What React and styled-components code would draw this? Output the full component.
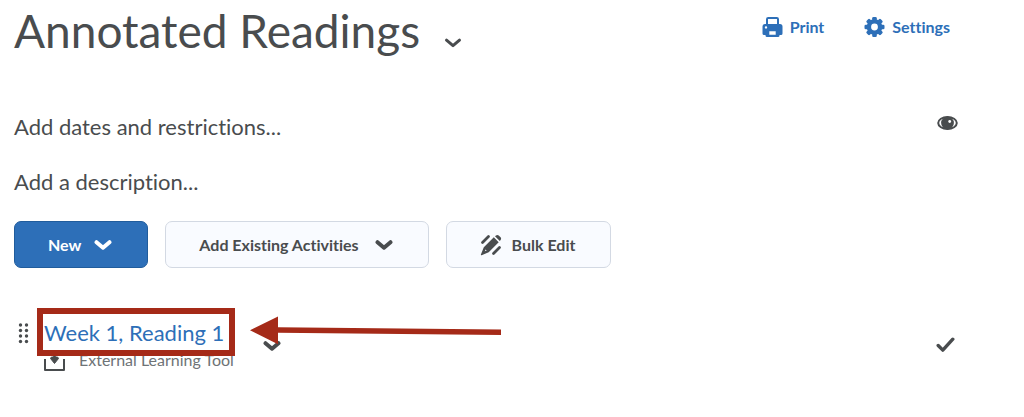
import styled, { createGlobalStyle } from "styled-components"

const GlobalStyle = createGlobalStyle`
    body {
        margin: 0;
        background: #fff;
        color: #494c4e;
        font-family: Lato, "Liberation Sans", sans-serif;
        font-variant-ligatures: none;
    }
    *, *::before, *::after {
        box-sizing: border-box;
    }
    button {
        font-family: inherit;
        font-variant-ligatures: none;
    }
    svg {
        display: block;
        flex: none;
    }
`;

const Page = styled.main`
    padding: 0 74px 32px 14px;
`;

const Header = styled.header`
    display: flex;
    justify-content: space-between;
    align-items: flex-start;
    margin-bottom: 49px;
`;

const TitleGroup = styled.div`
    display: flex;
    align-items: flex-end;
    gap: 24px;
`;

const Title = styled.h1`
    margin: 0;
    font-size: 46px;
    font-weight: 400;
    line-height: 62px;
`;

const IconButton = styled.button`
    padding: 0;
    border: 0;
    background: none;
    color: inherit;
    cursor: pointer;
`;

const TitleMenu = styled(IconButton)`
    margin-bottom: 13px;
`;

const Actions = styled.nav`
    display: flex;
    gap: 40px;
    padding-top: 16px;
`;

const Action = styled.button`
    display: flex;
    align-items: center;
    gap: 7px;
    padding: 0;
    border: 0;
    background: none;
    color: #2d6fb8;
    font-size: 16px;
    font-weight: 700;
    line-height: 22px;
    cursor: pointer;
`;

const Details = styled.div`
    display: flex;
    flex-direction: column;
    gap: 23px;
    margin-bottom: 23px;
`;

const DetailRow = styled.div`
    display: flex;
    justify-content: space-between;
    align-items: flex-start;
`;

const DetailButton = styled.button`
    padding: 0;
    border: 0;
    background: none;
    color: inherit;
    font-size: 22px;
    line-height: 32px;
    cursor: pointer;
`;

const VisibilityButton = styled(IconButton)`
    margin: 4px -8px 0 0;
`;

const Toolbar = styled.div`
    display: flex;
    gap: 17px;
    margin-bottom: 49px;
`;

const Button = styled.button`
    display: flex;
    align-items: center;
    gap: ${({ $gap }) => $gap}px;
    height: 47px;
    padding: 0 35px 0 33px;
    border: 1px solid ${({ $primary }) => ($primary ? "#205c9c" : "#d3d9e3")};
    border-radius: 7px;
    background: ${({ $primary }) => ($primary ? "#2d6fb8" : "#f9fbff")};
    color: ${({ $primary }) => ($primary ? "#fff" : "#494c4e")};
    font-size: 16px;
    font-weight: 700;
    line-height: 24px;
    cursor: pointer;
`;

const List = styled.ul`
    margin: 0;
    padding: 0;
    list-style: none;
`;

const Item = styled.li`
    position: relative;
    display: flex;
    align-items: flex-start;
`;

const Handle = styled(IconButton)`
    margin: 6px 15px 0 4px;
`;

const ItemBody = styled.div`
    display: flex;
    flex-direction: column;
    gap: 1px;
`;

const ItemLink = styled.a`
    color: #2d6fb8;
    font-size: 22px;
    line-height: 32px;
    text-decoration: none;
`;

const ItemType = styled.div`
    display: flex;
    align-items: flex-start;
    gap: 14px;
    color: #6e7376;
    font-size: 16px;
    line-height: 20px;
`;

const ToolIconBox = styled.span`
    color: #494c4e;
`;

const ItemMenu = styled(IconButton)`
    margin: 23px 0 0 29px;
`;

const Done = styled.span`
    margin: 19px -5px 0 auto;
`;

const Highlight = styled.div`
    position: absolute;
    top: -9px;
    left: 23px;
    width: 198px;
    height: 48px;
    border: 6px solid #a52a18;
    pointer-events: none;
`;

const Arrow = styled.svg`
    position: absolute;
    top: -1px;
    left: 236px;
    pointer-events: none;
`;

function Chevron({ stroke = 3 }) {
    return (
        <svg width="18" height="12" viewBox="0 0 18 12" fill="none" stroke="currentColor" strokeWidth={stroke} strokeLinecap="round" strokeLinejoin="round" aria-hidden="true">
            <path d="M2.500 3.200 9 8.700l6.500-5.500" />
        </svg>
    )
}

function PrintIcon() {
    return (
        <svg width="21" height="20" viewBox="0 0 20 20" aria-hidden="true">
            <path d="M4.500 8V2.200C4.500 1.500 5 1 5.700 1h8.600c.7 0 1.200.5 1.200 1.200V8" fill="none" stroke="currentColor" strokeWidth="2" />
            <path fill="currentColor" fillRule="evenodd" d="M2.500 7h15A2.500 2.500 0 0 1 20 9.500v7a1.500 1.500 0 0 1-1.500 1.500H17v.5a1.500 1.500 0 0 1-1.500 1.500h-11A1.500 1.500 0 0 1 3 18.500V18H1.500A1.500 1.500 0 0 1 0 16.500v-7A2.500 2.500 0 0 1 2.500 7Zm4.300 7.200v3.600h6.400v-3.600ZM3.500 9.200a1.200 1.200 0 1 0 0 2.400 1.200 1.200 0 0 0 0-2.400Z" />
        </svg>
    )
}

const teeth = [0, 45, 90, 135, 180, 225, 270, 315];

function GearIcon() {
    return (
        <svg width="21" height="20" viewBox="0 0 20 20" aria-hidden="true">
            <circle cx="10" cy="10" r="5.600" fill="none" stroke="currentColor" strokeWidth="4.400" />
            {teeth.map((angle) => (
                <rect key={angle} x="7.700" y="0" width="4.600" height="4.500" rx="1.300" fill="currentColor" transform={`rotate(${angle} 10 10)`} />
            ))}
        </svg>
    )
}

function EyeIcon() {
    return (
        <svg width="21" height="16" viewBox="0 0 21 16" aria-hidden="true">
            <ellipse cx="10.500" cy="8" rx="9.300" ry="6" fill="#fff" stroke="currentColor" strokeWidth="2" />
            <circle cx="10.500" cy="8" r="6.400" fill="currentColor" />
            <circle cx="12.700" cy="6.500" r="1.400" fill="#fff" />
        </svg>
    )
}

function BulkEditIcon() {
    return (
        <svg width="22" height="22" viewBox="0 0 22 22" aria-hidden="true">
            <path d="M2.500 8.500 8.500 2.500M13.500 19.500l6-6" fill="none" stroke="currentColor" strokeWidth="2.800" strokeLinecap="round" />
            <path fill="currentColor" fillRule="evenodd" d="M13.800 3.300 18.700 8.200 8.700 18.200 1.600 21.200c-.6.2-.9-.1-.7-.7L3.800 13.300ZM5.600 15.400l-.8 1.900 1.900-.8Z" />
            <path fill="currentColor" d="m15 2.200 1-.8c.8-.7 1.900-.7 2.700 0l1.900 1.900c.7.8.7 1.900 0 2.700L19.800 7Z" />
        </svg>
    )
}

function DragIcon() {
    return (
        <svg width="11" height="21" viewBox="0 0 11 21" fill="currentColor" aria-hidden="true">
            {[2, 7.500, 13, 18.500].map((y) => (
                <g key={y}>
                    <circle cx="2.500" cy={y} r="1.700" />
                    <circle cx="8.500" cy={y} r="1.700" />
                </g>
            ))}
        </svg>
    )
}

function ToolIcon() {
    return (
        <svg width="21" height="21" viewBox="0 0 21 21" aria-hidden="true">
            <path d="M1 9v11h19V9" fill="none" stroke="currentColor" strokeWidth="2" strokeLinejoin="round" />
            <path d="M10.500 0v8" fill="none" stroke="currentColor" strokeWidth="2.500" />
            <path d="M6.500 8.500c0-1 1-1.500 2-1.500h4c1 0 2 .5 2 1.500L10.500 13.500Z" fill="currentColor" stroke="currentColor" strokeLinejoin="round" />
        </svg>
    )
}

function CheckIcon() {
    return (
        <svg width="19" height="17" viewBox="0 0 19 17" fill="none" stroke="currentColor" strokeWidth="3.400" strokeLinecap="round" strokeLinejoin="round" role="img" aria-label="Completed">
            <path d="m2.200 9.500 4.600 4.600L16.800 3.200" />
        </svg>
    )
}

const details = [
    { text: "Add dates and restrictions...", visibility: true },
    { text: "Add a description..." },
];

export default function App() {
    return (
        <>
            <GlobalStyle />
            <Page>
                <Header>
                    <TitleGroup>
                        <Title>Annotated Readings</Title>
                        <TitleMenu aria-label="Module options"><Chevron /></TitleMenu>
                    </TitleGroup>
                    <Actions>
                        <Action><PrintIcon />Print</Action>
                        <Action><GearIcon />Settings</Action>
                    </Actions>
                </Header>
                <Details>
                    {details.map((detail) => (
                        <DetailRow key={detail.text}>
                            <DetailButton>{detail.text}</DetailButton>
                            {detail.visibility && (
                                <VisibilityButton aria-label="Visibility"><EyeIcon /></VisibilityButton>
                            )}
                        </DetailRow>
                    ))}
                </Details>
                <Toolbar>
                    <Button $primary $gap={13}>New<Chevron stroke={4} /></Button>
                    <Button $gap={16}>Add Existing Activities<Chevron stroke={4} /></Button>
                    <Button $gap={10}><BulkEditIcon />Bulk Edit</Button>
                </Toolbar>
                <List>
                    <Item>
                        <Handle aria-label="Reorder"><DragIcon /></Handle>
                        <ItemBody>
                            <ItemLink href="#reading-1">Week 1, Reading 1</ItemLink>
                            <ItemType><ToolIconBox><ToolIcon /></ToolIconBox>External Learning Tool</ItemType>
                        </ItemBody>
                        <ItemMenu aria-label="Activity options"><Chevron stroke={4} /></ItemMenu>
                        <Done><CheckIcon /></Done>
                        <Highlight />
                        <Arrow width="252" height="30" viewBox="0 0 252 30" fill="#a52a18" aria-hidden="true">
                            <path d="M0 14.300 28 .5v10.800l223 2.200v5.400L28 16.700v11.500Z" />
                        </Arrow>
                    </Item>
                </List>
            </Page>
        </>
    )
}
